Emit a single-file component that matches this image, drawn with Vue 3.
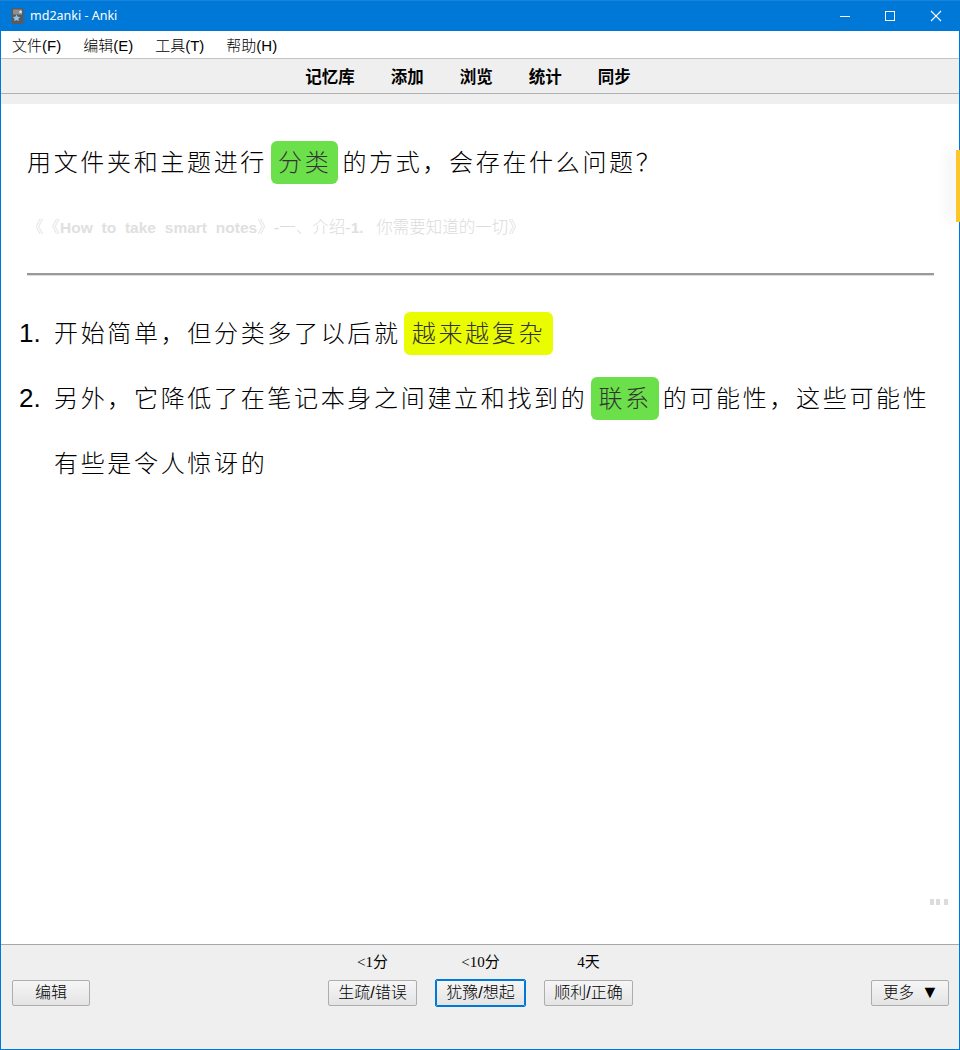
<script setup>
const menus = ['文件(F)', '编辑(E)', '工具(T)', '帮助(H)']
const links = ['记忆库', '添加', '浏览', '统计', '同步']
const answers = [
  { time: '<1分', label: '生疏/错误' },
  { time: '<10分', label: '犹豫/想起', focus: true },
  { time: '4天', label: '顺利/正确' }
]
</script>

<template>
  <div class="window">
    <header class="titlebar">
      <svg class="app-icon" width="16" height="16" viewBox="0 0 16 16">
        <rect x="1.5" y="0" width="12" height="16" rx="2" fill="#5a5a5a" />
        <rect x="3" y="1.5" width="9" height="5" fill="#8a8f96" />
        <path d="M6.5 6.5l1.2 2.2 2.5.3-1.8 1.7.5 2.5-2.4-1.2-2.3 1.2.4-2.5L2.8 9l2.5-.3z" fill="#8fc4ee" />
        <path d="M10.5 2l.6 1.2 1.3.2-1 .9.3 1.3-1.2-.6-1.1.6.2-1.3-.9-.9 1.3-.2z" fill="#e8eef4" />
      </svg>
      <span class="title">md2anki - Anki</span>
      <div class="controls">
        <svg width="46" height="30" viewBox="0 0 46 30"><path d="M18 15.5h10" stroke="#fff" stroke-width="1" /></svg>
        <svg width="46" height="30" viewBox="0 0 46 30"><rect x="17.5" y="10.5" width="9" height="9" fill="none" stroke="#fff" stroke-width="1" /></svg>
        <svg width="46" height="30" viewBox="0 0 46 30"><path d="M17 10l10 10M27 10L17 20" stroke="#fff" stroke-width="1.1" /></svg>
      </div>
    </header>

    <nav class="menubar">
      <span v-for="m in menus" :key="m" class="menu">{{ m }}</span>
    </nav>

    <div class="toplinks">
      <span v-for="l in links" :key="l" class="toplink">{{ l }}</span>
    </div>
    <div class="web-strip"></div>

    <main class="card">
      <div class="question">用文件夹和主题进行<span class="hl green">分类</span>的方式，会存在什么问题？</div>
      <div class="source">《《<span class="latin">How to take smart notes</span>》-一、介绍-<span class="latin num">1.</span> 你需要知道的一切》</div>
      <hr class="rule" />
      <ol class="answer">
        <li>开始简单，但分类多了以后就<span class="hl yellow">越来越复杂</span></li>
        <li>另外，它降低了在笔记本身之间建立和找到的<span class="hl green">联系</span>的可能性，这些可能性有些是令人惊讶的</li>
      </ol>
      <div class="flag"></div>
      <div class="dots"><i></i><i></i><i></i></div>
    </main>

    <footer class="bottom">
      <div class="side left"><button class="btn edit">编辑</button></div>
      <div class="answers">
        <div v-for="a in answers" :key="a.label" class="ans">
          <span class="time">{{ a.time }}</span>
          <button class="btn" :class="{ focus: a.focus }">{{ a.label }}</button>
        </div>
      </div>
      <div class="side right"><button class="btn edit more">更多<span class="arrow">▼</span></button></div>
    </footer>
  </div>
</template>

<style>
html, body { margin: 0; padding: 0; background: #fff; }
</style>

<style scoped>
.window {
  width: 960px;
  height: 1050px;
  box-sizing: border-box;
  border: 1px solid #0078d7;
  border-top: 0;
  display: flex;
  flex-direction: column;
  font-family: "Liberation Serif", "Noto Sans CJK SC", serif;
  color: #000;
  position: relative;
  text-spacing-trim: space-all;
}
.titlebar {
  height: 31px;
  flex: none;
  background: #0078d7;
  box-shadow: inset 0 1px #1784dd;
  display: flex;
  align-items: center;
  color: #fff;
  font-family: "Noto Sans", "Liberation Sans", sans-serif;
  font-size: 12.5px;
  margin: 0 -1px;
}
.app-icon { margin-left: 10px; }
.title { margin-left: 4px; }
.controls { margin-left: auto; display: flex; }
.menubar {
  height: 27px;
  flex: none;
  background: #fff;
  display: flex;
  align-items: center;
  font-family: "Liberation Sans", "Noto Sans CJK SC", sans-serif;
  font-size: 15px;
  font-weight: 300;
  padding-left: 11px;
  gap: 22px;
}
.toplinks {
  height: 36px;
  flex: none;
  box-sizing: border-box;
  background: #efefef;
  border-top: 1px solid #c4c4c4;
  border-bottom: 1px solid #b0b0b0;
  display: flex;
  justify-content: center;
  align-items: center;
  gap: 36px;
  font-size: 16.5px;
  font-weight: 700;
  padding-right: 24px;
}
.web-strip { height: 10px; flex: none; background: #efefef; }
.card {
  flex: 1;
  min-height: 0;
  position: relative;
  background: #fff;
  padding: 0 26px;
}
.question {
  font-family: "Liberation Sans", "Noto Sans CJK SC", sans-serif;
  font-size: 24px;
  line-height: 37px;
  font-weight: 300;
  letter-spacing: 2.67px;
  color: #000;
  padding-top: 37px;
  white-space: nowrap;
}
.hl {
  display: inline-block;
  border-radius: 6px;
  padding: 3px 7px;
  margin: 0 4px;
  line-height: 37px;
  color: #333;
}
.green { background: #6be04a; }
.yellow { background: #eafc00; padding: 3px 8px; margin-left: 3px; }
.source {
  font-family: "Liberation Sans", "Noto Sans CJK SC", sans-serif;
  color: #dcdcdc;
  font-size: 16.5px;
  font-weight: 300;
  line-height: 24px;
  height: 24px;
  margin-top: 31px;
  white-space: nowrap;
}
.latin { font-size: 15.5px; font-weight: 700; word-spacing: 4.5px; color: #e0e0e0; }
.num { margin-right: 8px; }
.rule {
  margin: 34px 0 0;
  border: 0;
  border-top: 2px solid #999;
  box-shadow: 0 1px #ddd;
  height: 0;
  width: 907px;
}
.answer {
  margin: 26px 0 0;
  padding: 0 0 0 27px;
  list-style: none;
  counter-reset: item;
  font-size: 24px;
  font-weight: 300;
  font-family: "Liberation Sans", "Noto Sans CJK SC", sans-serif;
  letter-spacing: 2.67px;
  line-height: 65px;
  color: #000;
}
.answer li { position: relative; counter-increment: item; }
.answer li::before {
  content: counter(item) ".";
  position: absolute;
  left: -35px;
  font-size: 26px;
  font-weight: 400;
  letter-spacing: 0;
  color: #000;
}
.flag {
  position: absolute;
  right: -1px;
  top: 46px;
  width: 4px;
  height: 72px;
  background: #fdc62b;
  box-shadow: -6px 0 14px rgba(0,0,0,0.12);
}
.dots {
  position: absolute;
  right: 11px;
  top: 795px;
  display: flex;
  gap: 2px;
}
.dots i { width: 4px; height: 6px; background: #dcdcdc; display: block; }
.dots i:last-child { margin-left: 2px; }
.bottom {
  height: 105px;
  flex: none;
  box-sizing: border-box;
  background: #efefef;
  border-top: 1px solid #a8a8a8;
  position: relative;
  display: flex;
  justify-content: space-between;
  padding: 0 10px 0 11px;
}
.side { padding-top: 35px; }
.answers {
  display: flex;
  gap: 19px;
  position: absolute;
  left: 327px;
  top: 6px;
}
.ans { display: flex; flex-direction: column; align-items: center; width: 89px; }
.time { font-size: 15px; line-height: 23px; height: 29px; white-space: nowrap; }
.btn {
  width: 89px;
  height: 26px;
  box-sizing: border-box;
  border: 1px solid #adadad;
  border-radius: 2px;
  background: linear-gradient(#f6f6f6, #e4e4e4);
  font-family: "Liberation Sans", "Noto Sans CJK SC", sans-serif;
  font-weight: 300;
  font-size: 16px;
  line-height: 22px;
  padding: 0;
  color: #000;
  margin: 0;
  text-spacing-trim: space-all;
}
.btn.edit { width: 78px; }
.btn.more { font-size: 15.5px; padding-left: 2px; }
.arrow { margin-left: 7px; font-family: "DejaVu Sans", sans-serif; font-size: 18px; line-height: 1; }
.btn.focus { border: 1px solid #0078d7; outline: 1px solid #0078d7; border-radius: 1px; }
</style>
